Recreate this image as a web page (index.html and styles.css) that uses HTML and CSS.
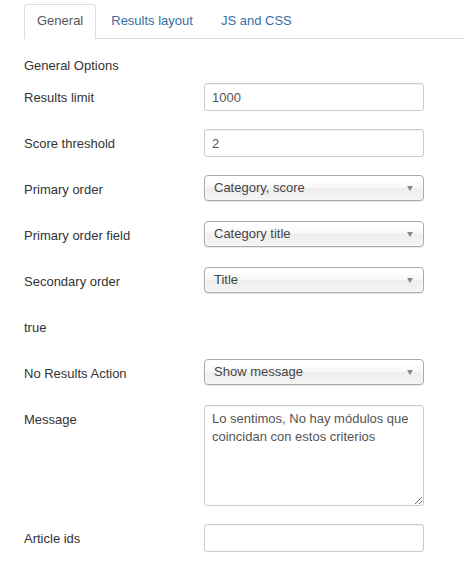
FILE: index.html
```html
<!DOCTYPE html>
<html>
<head>
<meta charset="utf-8">
<link rel="stylesheet" href="styles.css">
</head>
<body>
<div class="page">
  <ul class="tabs">
    <li class="tab active">General</li>
    <li class="tab">Results layout</li>
    <li class="tab">JS and CSS</li>
  </ul>
  <div class="legend">General Options</div>
  <div class="row"><div class="label">Results limit</div><div class="control"><input class="text" type="text" value="1000"></div></div>
  <div class="row"><div class="label">Score threshold</div><div class="control"><input class="text" type="text" value="2"></div></div>
  <div class="row"><div class="label">Primary order</div><div class="control"><div class="select"><span>Category, score</span><i class="arrow"></i></div></div></div>
  <div class="row"><div class="label">Primary order field</div><div class="control"><div class="select"><span>Category title</span><i class="arrow"></i></div></div></div>
  <div class="row"><div class="label">Secondary order</div><div class="control"><div class="select"><span>Title</span><i class="arrow"></i></div></div></div>
  <div class="row"><div class="label">true</div></div>
  <div class="row"><div class="label">No Results Action</div><div class="control"><div class="select"><span>Show message</span><i class="arrow"></i></div></div></div>
  <div class="row"><div class="label">Message</div><div class="control"><textarea class="area">Lo sentimos, No hay módulos que coincidan con estos criterios</textarea></div></div>
  <div class="row"><div class="label">Article ids</div><div class="control"><input class="text" type="text" value=""></div></div>
</div>
</body>
</html>
```
FILE: styles.css
```css
html, body {
  margin: 0;
  padding: 0;
  background: #fff;
}
body {
  font-family: "Liberation Sans", Arial, sans-serif;
  font-size: 13px;
  line-height: 18px;
  color: #333;
}
.page {
  padding-left: 24px;
  padding-top: 4px;
}
.tabs {
  list-style: none;
  margin: 0;
  padding: 0;
  display: flex;
  border-bottom: 1px solid #ddd;
  height: 34px;
}
.tab {
  padding: 0 12px;
  height: 33px;
  line-height: 32px;
  border: 1px solid transparent;
  border-bottom: none;
  margin-right: 2px;
  color: #3a6ea5;
  border-radius: 4px 4px 0 0;
}
.tab.active {
  color: #555;
  border-color: #ddd;
  background: #fff;
  height: 34px;
}
.legend {
  margin-top: 18px;
  margin-bottom: 8px;
  line-height: 18px;
}
.row {
  display: flex;
  align-items: flex-start;
  min-height: 28px;
  margin-bottom: 18px;
}
.label {
  width: 180px;
  padding-top: 6px;
  line-height: 18px;
}
.control {
  width: 220px;
}
.text {
  box-sizing: border-box;
  width: 220px;
  height: 28px;
  margin: 0;
  padding: 4px 7px;
  border: 1px solid #ccc;
  border-radius: 3px;
  font-family: inherit;
  font-size: 13px;
  color: #555;
  box-shadow: inset 0 1px 1px rgba(0,0,0,0.06);
  outline: none;
}
.select {
  box-sizing: border-box;
  width: 220px;
  height: 26px;
  border: 1px solid #aaa;
  border-radius: 4px;
  background: linear-gradient(#fff 20%, #f6f6f6 50%, #eee 52%, #f4f4f4 100%);
  box-shadow: 0 0 3px #fff inset, 0 1px 1px rgba(0,0,0,0.1);
  display: flex;
  align-items: center;
  justify-content: space-between;
  padding: 0 10px 0 9px;
  color: #444;
}
.arrow {
  width: 0;
  height: 0;
  border-left: 3.5px solid transparent;
  border-right: 3.5px solid transparent;
  border-top: 5px solid #888;
}
.area {
  box-sizing: border-box;
  width: 220px;
  height: 101px;
  margin: 0;
  padding: 4px 7px;
  border: 1px solid #ccc;
  border-radius: 3px;
  font-family: inherit;
  font-size: 13px;
  line-height: 18px;
  color: #555;
  box-shadow: inset 0 1px 1px rgba(0,0,0,0.06);
  outline: none;
  display: block;
}
```
